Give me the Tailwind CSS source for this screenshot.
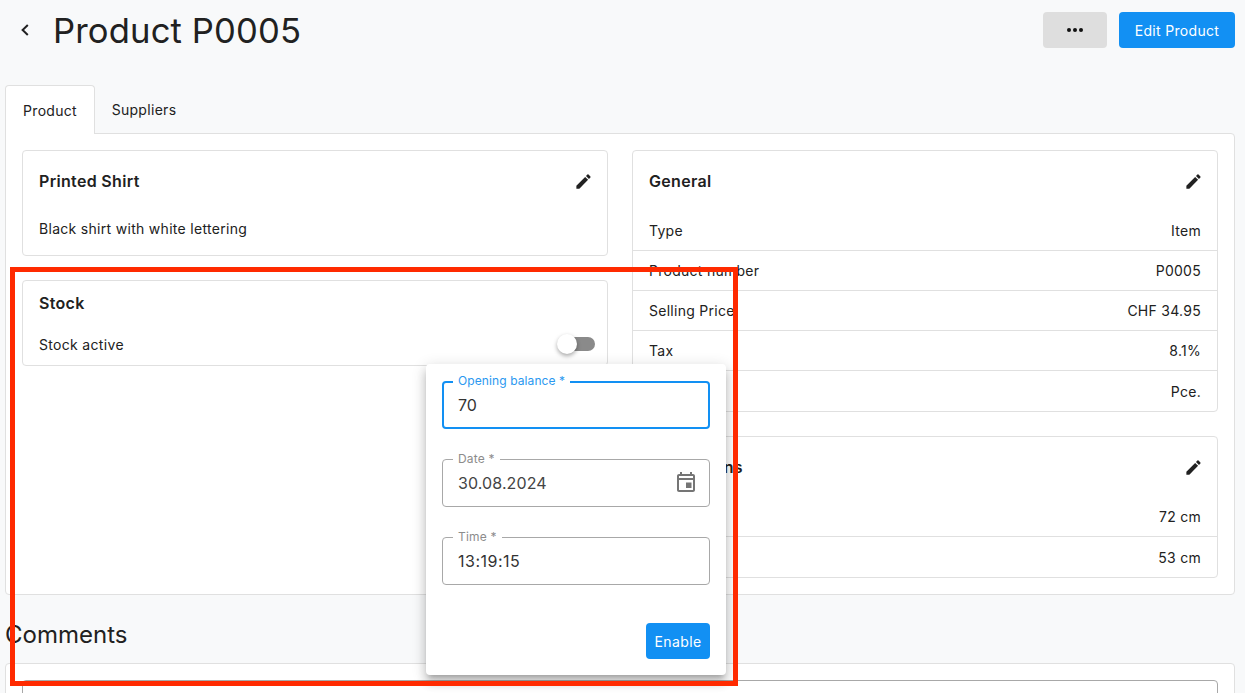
<!DOCTYPE html>
<html>
<head>
<meta charset="utf-8">
<script src="https://cdn.jsdelivr.net/npm/@tailwindcss/browser@4"></script>
</head>
<body class="bg-[#f8f9fa] font-['Inter',sans-serif] text-[#212121] overflow-hidden">
<div class="relative w-[1245px] h-[693px] overflow-hidden pl-[5px] pr-[10px]">
  <!-- header -->
  <div class="flex items-center h-[60px]">
    <svg class="ml-[14px] w-[12px] h-[12px]" viewBox="0 0 12 12" fill="none" stroke="#212121" stroke-width="2"><path d="M8.8 1 L3.6 6 L8.8 11"/></svg>
    <h1 class="ml-[22px] text-[34.6px] leading-[40px] font-normal tracking-[0.15px]">Product P0005</h1>
    <div class="ml-auto flex gap-3">
      <button class="w-[64px] h-[36px] rounded-[4px] bg-[#dedede] flex items-center justify-center gap-[2px]">
        <span class="w-[4px] h-[4px] rounded-full bg-[#111]"></span><span class="w-[4px] h-[4px] rounded-full bg-[#111]"></span><span class="w-[4px] h-[4px] rounded-full bg-[#111]"></span>
      </button>
      <button class="w-[116px] h-[36px] rounded-[4px] bg-[#1290f3] text-white text-[14px] font-normal tracking-[0.32px]">Edit Product</button>
    </div>
  </div>
  <!-- tabs -->
  <div class="flex mt-[25px] h-[49px] relative z-10 tracking-[0.3px]">
    <div class="w-[90px] h-[49px] bg-white border border-[#e0e0e0] border-b-0 rounded-t-[4px] flex items-center justify-center text-[14px] font-normal">Product</div>
    <div class="w-[98px] flex items-center justify-center text-[14px] font-normal">Suppliers</div>
  </div>
  <!-- panel -->
  <div class="-mt-px h-[462px] bg-white border border-[#e0e0e0] rounded-b-[4px] rounded-tr-[4px] pt-[16px] px-[16px] flex gap-[24px]">
    <div class="w-[586px] flex flex-col gap-[24px]">
      <section class="h-[106px] border border-[#e0e0e0] rounded-[4px] px-[16px]">
        <div class="flex items-center justify-between h-[60px]">
          <h2 class="text-[16px] font-semibold tracking-[0.32px]">Printed Shirt</h2>
          <svg class="w-[19px] h-[19px] -mr-[1.5px]" viewBox="0 0 24 24" fill="#212121"><path d="M3 17.25V21h3.75L17.81 9.94l-3.75-3.75L3 17.25zM20.71 7.04a1 1 0 0 0 0-1.41l-2.34-2.34a1 1 0 0 0-1.41 0l-1.83 1.83 3.75 3.75 1.83-1.83z"/></svg>
        </div>
        <p class="text-[14px] leading-[20px] mt-[8px] tracking-[0.3px]">Black shirt with white lettering</p>
      </section>
      <section class="h-[86px] border border-[#e0e0e0] rounded-[4px] px-[16px]">
        <h2 class="text-[16px] font-semibold leading-[20px] mt-[12px] tracking-[0.32px]">Stock</h2>
        <div class="flex items-center justify-between mt-[21px] h-[20px]">
          <span class="text-[14px] tracking-[0.32px]">Stock active</span>
          <span class="relative w-[34px] h-[14px] rounded-full bg-[#8a8a8a] mr-[-4px]">
            <span class="absolute -left-[4px] -top-[3px] w-[20px] h-[20px] rounded-full bg-white shadow-[0_2px_4px_rgba(0,0,0,0.35)]"></span>
          </span>
        </div>
      </section>
    </div>
    <div class="w-[586px] flex flex-col gap-[24px]">
      <section class="h-[262px] border border-[#e0e0e0] rounded-[4px] text-[14px] tracking-[0.27px]">
        <div class="flex items-center justify-between h-[60px] px-[16px]">
          <h2 class="text-[16px] font-semibold tracking-[0.32px]">General</h2>
          <svg class="w-[19px] h-[19px] -mr-[1.5px]" viewBox="0 0 24 24" fill="#212121"><path d="M3 17.25V21h3.75L17.81 9.94l-3.75-3.75L3 17.25zM20.71 7.04a1 1 0 0 0 0-1.41l-2.34-2.34a1 1 0 0 0-1.41 0l-1.83 1.83 3.75 3.75 1.83-1.83z"/></svg>
        </div>
        <div class="flex items-center justify-between h-[40px] px-[16px] border-b border-[#e0e0e0]"><span>Type</span><span>Item</span></div>
        <div class="flex items-center justify-between h-[40px] px-[16px] border-b border-[#e0e0e0]"><span>Product number</span><span>P0005</span></div>
        <div class="flex items-center justify-between h-[40px] px-[16px] border-b border-[#e0e0e0]"><span>Selling Price</span><span>CHF 34.95</span></div>
        <div class="flex items-center justify-between h-[40px] px-[16px] border-b border-[#e0e0e0]"><span>Tax</span><span>8.1%</span></div>
        <div class="flex items-center justify-between h-[40px] px-[16px]"><span>Unit</span><span>Pce.</span></div>
      </section>
      <section class="h-[142px] border border-[#e0e0e0] rounded-[4px] text-[14px] tracking-[0.27px]">
        <div class="flex items-center justify-between h-[60px] px-[16px]">
          <h2 class="text-[16px] font-semibold tracking-[0.32px]">Dimensions</h2>
          <svg class="w-[19px] h-[19px] -mr-[1.5px]" viewBox="0 0 24 24" fill="#212121"><path d="M3 17.25V21h3.75L17.81 9.94l-3.75-3.75L3 17.25zM20.71 7.04a1 1 0 0 0 0-1.41l-2.34-2.34a1 1 0 0 0-1.41 0l-1.83 1.83 3.75 3.75 1.83-1.83z"/></svg>
        </div>
        <div class="flex items-center justify-between h-[40px] px-[16px] border-b border-[#e0e0e0]"><span>Length</span><span>72 cm</span></div>
        <div class="flex items-center justify-between h-[40px] px-[16px]"><span>Width</span><span>53 cm</span></div>
      </section>
    </div>
  </div>
  <!-- comments -->
  <h2 class="mt-[26px] text-[24px] leading-[28px] font-normal">Comments</h2>
  <div class="mt-[14px] h-[100px] bg-white border border-[#e0e0e0] rounded-[4px] pt-[16px] px-[16px]">
    <div class="h-[80px] border border-[#a8a8a8] rounded-[4px]"></div>
  </div>

  <!-- popover -->
  <div class="absolute left-[426px] top-[364px] w-[300px] h-[311px] bg-white rounded-[4px] shadow-[0_5px_5px_-3px_rgba(0,0,0,0.2),0_8px_10px_1px_rgba(0,0,0,0.14),0_3px_14px_2px_rgba(0,0,0,0.12)] px-[16px] pt-[17px] flex flex-col">
    <div class="relative h-[48px] border-2 border-[#1290f3] rounded-[4px] flex items-center pl-[14px]">
      <span class="absolute left-[9px] -top-[9px] bg-white px-[5px] text-[12px] leading-[14px] text-[#2a98f0] tracking-[0.1px]">Opening balance *</span>
      <span class="text-[16px] text-[#333]">70</span>
    </div>
    <div class="relative h-[48px] mt-[30px] border border-[#a8a8a8] rounded-[4px] flex items-center pl-[15px] pr-[11px] justify-between">
      <span class="absolute left-[10px] -top-[8px] bg-white px-[5px] text-[12px] leading-[14px] text-[#8c8c8c] tracking-[0.2px]">Date *</span>
      <span class="text-[16px] text-[#444] tracking-[0.1px]">30.08.2024</span>
      <svg class="w-[24px] h-[24px] -mt-[2px]" viewBox="0 0 24 24" fill="#757575"><path d="M19 4h-1V2h-2v2H8V2H6v2H5c-1.11 0-1.99.9-1.99 2L3 20c0 1.1.89 2 2 2h14c1.1 0 2-.9 2-2V6c0-1.1-.9-2-2-2zm0 16H5V10h14v10zm0-12H5V6h14v2z"/><rect x="12" y="12.5" width="5.5" height="5.5"/></svg>
    </div>
    <div class="relative h-[48px] mt-[30px] border border-[#a8a8a8] rounded-[4px] flex items-center pl-[15px]">
      <span class="absolute left-[10px] -top-[8px] bg-white px-[5px] text-[12px] leading-[14px] text-[#8c8c8c] tracking-[0.2px]">Time *</span>
      <span class="text-[16px] text-[#333] tracking-[0.5px]">13:19:15</span>
    </div>
    <button class="self-end mt-[38px] w-[64px] h-[36px] rounded-[4px] bg-[#1290f3] text-white text-[14px] font-normal tracking-[0.4px]">Enable</button>
  </div>

  <!-- annotation -->
  <div class="absolute left-[10px] top-[267px] w-[728px] h-[419px] border-[5px] border-[#ff2a00] pointer-events-none"></div>
</div>
</body>
</html>
